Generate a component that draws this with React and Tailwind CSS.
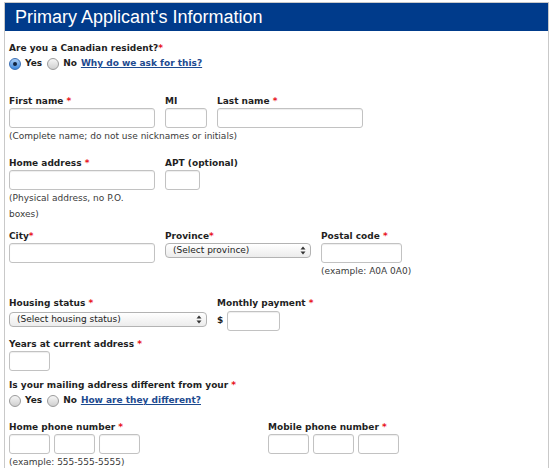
import React from "react";

const Req = ({ space = true }) => (
  <span className="text-[#e8121b]">{space ? " *" : "*"}</span>
);

const Label = ({ children, className = "" }) => (
  <div className={`h-[14px] leading-[14px] text-[9px] font-bold text-[#1f1f1f] whitespace-nowrap ${className}`}>
    {children}
  </div>
);

const Field = ({ w }) => (
  <input
    type="text"
    className={`block h-[20px] rounded-[3px] border border-[#c2c2c2] bg-white shadow-[inset_0_1px_1px_rgba(0,0,0,0.07)] outline-none ${w}`}
  />
);

const Help = ({ children, className = "" }) => (
  <div className={`text-[9px] leading-[16px] text-[#3a3a3a] ${className}`}>{children}</div>
);

const SelectBox = ({ text, w }) => (
  <div
    className={`flex h-[15px] items-center justify-between rounded-[4px] border border-[#b3b3b3] bg-gradient-to-b from-white to-[#ececec] pl-[7px] pr-[4px] text-[9px] text-[#222] ${w}`}
  >
    <span>{text}</span>
    <svg width="6" height="9" viewBox="0 0 6 9">
      <path d="M3 0.5 L5.5 3.5 H0.5 Z" fill="#333" />
      <path d="M3 8.5 L5.5 5.5 H0.5 Z" fill="#333" />
    </svg>
  </div>
);

const Radio = ({ checked }) =>
  checked ? (
    <span className="flex h-[12px] w-[12px] shrink-0 items-center justify-center rounded-full border border-[#3a6fb5] bg-gradient-to-b from-[#a9cdf4] to-[#3d89dd]">
      <span className="block h-[4px] w-[4px] rounded-full bg-[#12243f]" />
    </span>
  ) : (
    <span className="block h-[12px] w-[12px] shrink-0 rounded-full border border-[#9b9b9b] bg-gradient-to-b from-[#f6f6f6] to-[#d0d0d0]" />
  );

const RadioRow = ({ yes, link }) => (
  <div className="flex h-[14px] items-center text-[9px] font-bold text-[#1f1f1f]">
    <Radio checked={yes} />
    <span className="ml-[4px]">Yes</span>
    <span className="ml-[5px] block">
      <Radio />
    </span>
    <span className="ml-[4px]">No</span>
    <a href="#" className="ml-[4px] text-[#1d4a8f] underline underline-offset-1">
      {link}
    </a>
  </div>
);

export default function App() {
  return (
    <div className="h-[468px] w-[550px] overflow-hidden bg-white font-['DejaVu_Sans',Verdana,sans-serif]">
      <div className="ml-[4px] mt-[2px] h-[470px] w-[545px] border border-b-0 border-[#c9c9c9]">
        <div className="h-[28px] bg-[#003b8b] pl-[10px] font-['Liberation_Sans',Arial,sans-serif] text-[18px] leading-[28px] text-white">
          Primary Applicant's Information
        </div>

        <div className="pl-[4px]">
          <Label className="mt-[10px]">
            Are you a Canadian resident?<Req space={false} />
          </Label>
          <div className="mt-[2px]">
            <RadioRow yes link="Why do we ask for this?" />
          </div>

          <div className="mt-[23px] flex gap-[10px]">
            <div>
              <Label>
                First name<Req />
              </Label>
              <Field w="w-[146px]" />
            </div>
            <div>
              <Label>MI</Label>
              <Field w="w-[42px]" />
            </div>
            <div>
              <Label>
                Last name<Req />
              </Label>
              <Field w="w-[146px]" />
            </div>
          </div>
          <Help>(Complete name; do not use nicknames or initials)</Help>

          <div className="mt-[12px] flex gap-[10px]">
            <div className="w-[146px]">
              <Label>
                Home address<Req />
              </Label>
              <Field w="w-[146px]" />
              <Help>(Physical address, no P.O. boxes)</Help>
            </div>
            <div>
              <Label>APT (optional)</Label>
              <Field w="w-[35px]" />
            </div>
          </div>

          <div className="mt-[7px] flex gap-[10px]">
            <div className="w-[146px]">
              <Label>
                City<Req space={false} />
              </Label>
              <Field w="w-[146px]" />
            </div>
            <div className="w-[146px]">
              <Label>
                Province<Req space={false} />
              </Label>
              <SelectBox text="(Select province)" w="w-[146px]" />
            </div>
            <div>
              <Label>
                Postal code<Req />
              </Label>
              <Field w="w-[81px]" />
              <Help>(example: A0A 0A0)</Help>
            </div>
          </div>

          <div className="mt-[17px] flex gap-[10px]">
            <div className="w-[198px]">
              <Label>
                Housing status<Req />
              </Label>
              <SelectBox text="(Select housing status)" w="w-[198px] mt-[2px]" />
            </div>
            <div>
              <Label>
                Monthly payment<Req />
              </Label>
              <div className="mt-[1px] flex items-center gap-[4px]">
                <span className="text-[9px] font-bold text-[#1f1f1f]">$</span>
                <Field w="w-[53px]" />
              </div>
            </div>
          </div>

          <Label className="mt-[6px]">
            Years at current address<Req />
          </Label>
          <Field w="w-[41px]" />

          <Label className="mt-[7px]">
            Is your mailing address different from your<Req />
          </Label>
          <div className="mt-[2px]">
            <RadioRow link="How are they different?" />
          </div>

          <div className="mt-[12px] flex">
            <div className="w-[259px]">
              <Label>
                Home phone number<Req />
              </Label>
              <div className="flex gap-[4px]">
                <Field w="w-[41px]" />
                <Field w="w-[41px]" />
                <Field w="w-[41px]" />
              </div>
              <Help>(example: 555-555-5555)</Help>
            </div>
            <div>
              <Label>
                Mobile phone number<Req />
              </Label>
              <div className="flex gap-[4px]">
                <Field w="w-[41px]" />
                <Field w="w-[41px]" />
                <Field w="w-[41px]" />
              </div>
            </div>
          </div>
        </div>
      </div>
    </div>
  );
}
